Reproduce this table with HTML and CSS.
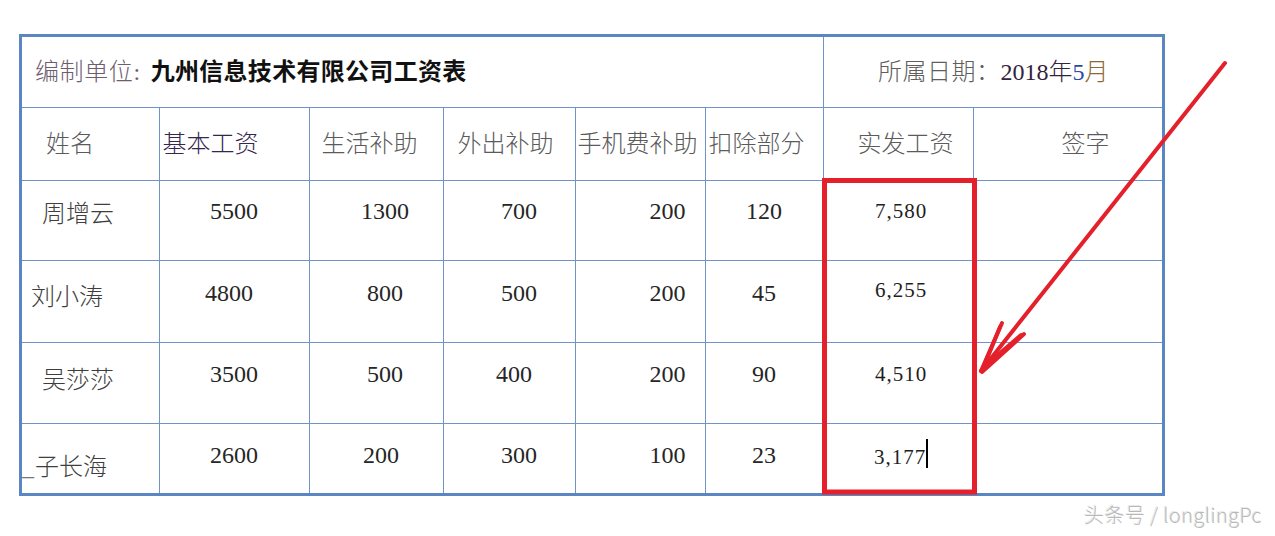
FILE: index.html
```html
<!DOCTYPE html>
<html lang="zh-CN">
<head>
<meta charset="utf-8">
<title>九州信息技术有限公司工资表</title>
<link rel="stylesheet" href="styles.css">
</head>
<body>
<div class="sheet">
  <table class="pay">
    <colgroup>
      <col class="c1"><col class="c2"><col class="c3"><col class="c4"><col class="c5"><col class="c6"><col class="c7"><col class="c8">
    </colgroup>
    <tr class="title">
      <td colspan="6" class="unit"><span class="lbl">编制单位:</span><b class="co">九州信息技术有限公司工资表</b></td>
      <td colspan="2" class="date"><span class="g">所属日期：</span><span class="d1">2018年</span><span class="d2">5</span><span class="d3">月</span></td>
    </tr>
    <tr class="head">
      <td>姓名</td><td class="dark">基本工资</td><td>生活补助</td><td>外出补助</td><td>手机费补助</td><td>扣除部分</td><td>实发工资</td><td>签字</td>
    </tr>
    <tr class="row r1">
      <td class="nm n1">周增云</td><td>5500</td><td>1300</td><td>700</td><td>200</td><td>120</td><td class="tot">7,580</td><td></td>
    </tr>
    <tr class="row r2">
      <td class="nm n2">刘小涛</td><td class="sh">4800</td><td>800</td><td>500</td><td>200</td><td>45</td><td class="tot">6,255</td><td></td>
    </tr>
    <tr class="row r3">
      <td class="nm n3">吴莎莎</td><td>3500</td><td>500</td><td class="sh">400</td><td>200</td><td>90</td><td class="tot">4,510</td><td></td>
    </tr>
    <tr class="row r4">
      <td class="nm n4"><span class="us">_</span>子长海</td><td>2600</td><td class="sh">200</td><td>300</td><td>100</td><td>23</td><td class="tot">3,177<span class="caret"></span></td><td></td>
    </tr>
  </table>
</div>
<div class="mark">头条号 / longlingPc</div>
<svg class="ink" width="1275" height="536" viewBox="0 0 1275 536" aria-hidden="true">
  <rect x="824.5" y="180.5" width="150" height="311.5" fill="none" stroke="#e4202b" stroke-width="5"/>
  <g stroke="#e4202b" stroke-width="4" stroke-linecap="round" fill="none">
    <line x1="1225" y1="63" x2="981" y2="371"/>
    <line x1="981" y1="371" x2="1002" y2="323"/>
    <line x1="984" y1="366" x2="1000" y2="327"/>
    <line x1="982" y1="372" x2="1024" y2="334"/>
    <line x1="985" y1="366" x2="1021" y2="335"/>
  </g>
</svg>
</body>
</html>
```

FILE: styles.css
```css
html, body {
  margin: 0;
  padding: 0;
  background: #ffffff;
}

body {
  width: 1275px;
  height: 536px;
  position: relative;
  overflow: hidden;
  font-family: "Liberation Serif", "Noto Sans CJK SC", serif;
  color: #2a2a2a;
}

.sheet {
  margin: 34px 0 0 19px;
  width: 1140px;
  border: 3px solid #5a86c1;
}

.pay {
  width: 1140px;
  border-collapse: collapse;
  border-style: hidden;
  table-layout: fixed;
}

.c1 { width: 137px; }
.c2 { width: 150px; }
.c3 { width: 134px; }
.c4 { width: 132px; }
.c5 { width: 130px; }
.c6 { width: 118px; }
.c7 { width: 150px; }
.c8 { width: 189px; }

.pay td {
  border: 1px solid #6f93c7;
  padding: 0;
  font-size: 24px;
  line-height: 28px;
  white-space: nowrap;
  font-weight: 300;
}

/* title row */
.title { height: 70px; }
.title td { vertical-align: middle; }
.unit { padding-left: 13px !important; padding-top: 1px !important; }
.lbl { color: #6e5d6e; letter-spacing: 0.6px; }
.co { color: #111; font-weight: 700; margin-left: 10px; letter-spacing: 0.3px; }
.date { text-align: center; color: #5e5e5e; padding-top: 1px !important; padding-left: 1px !important; }
.g { letter-spacing: 0.5px; }
.d1 { color: #34223e; }
.d2 { color: #2a48a6; }
.d3 { color: #8a6a34; }

/* header row */
.head { height: 73px; }
.head td { color: #5b5b5b; text-align: left; vertical-align: middle; }
.head td.dark { color: #34264f; }
.head td:nth-child(1) { padding-left: 24px; }
.head td:nth-child(2) { padding-left: 3px; }
.head td:nth-child(3) { padding-left: 12px; }
.head td:nth-child(4) { padding-left: 14px; }
.head td:nth-child(5) { padding-left: 2px; }
.head td:nth-child(6) { padding-left: 3px; }
.head td:nth-child(7) { padding-left: 34px; }
.head td:nth-child(8) { padding-left: 88px; }

/* data rows */
.r1 { height: 80px; }
.r2 { height: 82px; }
.r3 { height: 81px; }
.r4 { height: 70px; }

.row td {
  vertical-align: top;
  text-align: center;
  color: #262626;
  font-weight: 400;
}
.r1 td { padding-top: 16px; }
.r2 td { padding-top: 18px; }
.r3 td { padding-top: 17px; }
.r4 td { padding-top: 17px; }

.row td:nth-child(2) { padding-left: 0; }
.row td:nth-child(2).sh { padding-right: 10px; }
.row td:nth-child(3) { padding-left: 18px; }
.row td:nth-child(3).sh { padding-left: 10px; }
.row td:nth-child(4) { padding-left: 20px; }
.row td:nth-child(4).sh { padding-left: 10px; }
.row td:nth-child(5) { text-align: right; padding-right: 19px; }
.row td:nth-child(6) { text-align: center; }

.row td.tot {
  font-size: 21px;
  letter-spacing: 1px;
  padding-left: 6px;
  color: #1e1e1e;
}
.r1 td.tot { padding-top: 16px; }
.r2 td.tot { padding-top: 15px; }
.r3 td.tot { padding-top: 17px; }
.r4 td.tot { padding-top: 15px; }

.row td.nm {
  text-align: left;
  color: #3e3e3e;
  font-weight: 300;
}
.r1 td.n1 { padding-left: 20px; padding-top: 19px; }
.r2 td.n2 { padding-left: 9px; padding-top: 22px; }
.r3 td.n3 { padding-left: 20px; padding-top: 23px; }
.r4 td.n4 { padding-left: 0; padding-top: 29px; }

.us {
  font-family: "Liberation Serif", serif;
  color: #777;
  margin-right: 1px;
}

.caret {
  display: inline-block;
  width: 0;
  height: 29px;
  border-left: 2px solid #000;
  vertical-align: -4px;
  margin-left: 0;
}

/* watermark */
.mark {
  margin-top: 7px;
  text-align: right;
  padding-right: 13px;
  font-family: "Noto Sans CJK SC", "Noto Sans", sans-serif;
  font-weight: 300;
  font-size: 20px;
  letter-spacing: 0.4px;
  line-height: 24px;
  color: #b9b9b9;
  text-shadow: 1px 1px 0 #ffffff, -1px -1px 0 #e9e9e9;
}

/* annotation overlay */
.ink {
  position: absolute;
  left: 0;
  top: 0;
  pointer-events: none;
}
```
